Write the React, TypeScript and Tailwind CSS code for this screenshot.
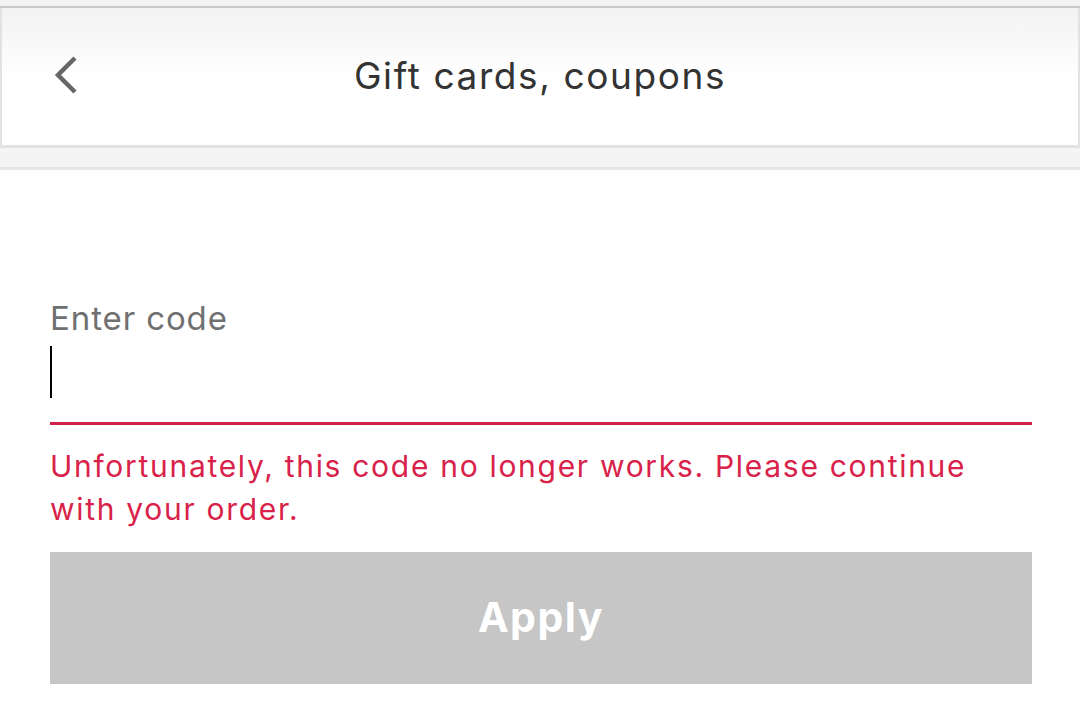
export default function App() {
  return (
    <div className="w-[1080px] h-[705px] bg-white overflow-hidden font-['Inter','Roboto',sans-serif]">
      <div className="h-[6px] bg-[#f3f3f3]" />
      <div className="h-[2px] bg-[#c9c9c9]" />
      <header className="relative h-[140px] border-x-2 border-b-[3px] border-[#e2e2e2] bg-gradient-to-b from-[#f2f2f2] via-white to-white flex items-center justify-center">
        <button className="absolute left-[49px] top-[47px] text-[#666]">
          <svg width="30" height="40" viewBox="0 0 30 40" fill="none">
            <path d="M24 3 L7 20 L24 37" stroke="currentColor" strokeWidth="4.5" />
          </svg>
        </button>
        <h1 className="text-[37px] text-[#333] tracking-[1.6px] -mt-[2px]">Gift cards, coupons</h1>
      </header>
      <div className="h-[22px] bg-[#f4f4f4] border-b-[3px] border-[#e6e6e6]" />
      <main className="px-[50px] pr-[48px] pt-[128px]">
        <label className="block text-[33px] text-[#707070] leading-[40px] tracking-[0.9px]">Enter code</label>
        <div className="h-[87px] border-b-[3px] border-[#cf2149] pt-[8px]">
          <div className="w-[2px] h-[52px] bg-black" />
        </div>
        <p className="mt-[20px] max-w-[945px] text-[30px] leading-[43px] text-[#d9224a] tracking-[1.7px]">
          Unfortunately, this code no longer works. Please continue with your order.
        </p>
        <button className="mt-[21px] w-full h-[132px] bg-[#c6c6c6] text-white text-[41px] font-bold tracking-[1.5px]">Apply</button>
      </main>
    </div>
  );
}
